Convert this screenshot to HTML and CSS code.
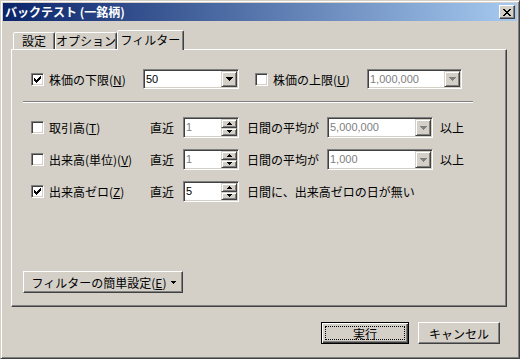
FILE: index.html
```html
<!DOCTYPE html>
<html lang="ja">
<head>
    <meta charset="UTF-8">
    <title>バックテスト (一銘柄)</title>
    <link rel="stylesheet" href="styles.css">
</head>
<body>
    <div class="window">
        <div class="titleBar">
            <span class="titleText">バックテスト (一銘柄)</span>
            <div class="closeBtn">
                <svg width="8" height="7" viewBox="0 0 8 7"><path d="M0 0h2v1H0zM6 0h2v1H6zM1 1h2v1H1zM5 1h2v1H5zM2 2h4v1H2zM3 3h2v1H3zM2 4h4v1H2zM1 5h2v1H1zM5 5h2v1H5zM0 6h2v1H0zM6 6h2v1H6z"/></svg>
            </div>
        </div>
        <div class="content">
            <ul class="tabs">
                <li class="tab w42">設定</li>
                <li class="tab w62">オプション</li>
                <li class="tab now">フィルター</li>
            </ul>
            <div class="panel">
                <div class="row rowTop">
                    <label class="check w112">
                        <span class="box"><svg width="7" height="7" viewBox="0 0 7 7"><path d="M0 2h1v3H0zM1 3h1v3H1zM2 4h1v3H2zM3 3h1v3H3zM4 2h1v3H4zM5 1h1v3H5zM6 0h1v3H6z"/></svg></span>
                        <span>株価の下限(<u>N</u>)</span>
                    </label>
                    <div class="combo w96">
                        <span class="val">50</span>
                        <span class="dropBtn"><svg width="7" height="4" viewBox="0 0 7 4"><path d="M0 0h7v1H0zM1 1h5v1H1zM2 2h3v1H2zM3 3h1v1H3z"/></svg></span>
                    </div>
                    <label class="check w112 gap16">
                        <span class="box"></span>
                        <span>株価の上限(<u>U</u>)</span>
                    </label>
                    <div class="combo w95 disabled">
                        <span class="val">1,000,000</span>
                        <span class="dropBtn"><svg width="7" height="4" viewBox="0 0 7 4"><path d="M0 0h7v1H0zM1 1h5v1H1zM2 2h3v1H2zM3 3h1v1H3z"/></svg></span>
                    </div>
                </div>

                <div class="sep"></div>

                <div class="rows">
                    <div class="row">
                        <label class="check w119">
                            <span class="box"></span>
                            <span>取引高(<u>T</u>)</span>
                        </label>
                        <span class="txt w33">直近</span>
                        <div class="spin disabled">
                            <span class="val">1</span>
                            <span class="spinBtns">
                                <span class="spinBtn"><svg width="5" height="3" viewBox="0 0 5 3"><path d="M2 0h1v1H2zM1 1h3v1H1zM0 2h5v1H0z"/></svg></span>
                                <span class="spinBtn"><svg width="5" height="3" viewBox="0 0 5 3"><path d="M0 0h5v1H0zM1 1h3v1H1zM2 2h1v1H2z"/></svg></span>
                            </span>
                        </div>
                        <span class="txt avg">日間の平均が</span>
                        <div class="combo w106 disabled">
                            <span class="val">5,000,000</span>
                            <span class="dropBtn"><svg width="7" height="4" viewBox="0 0 7 4"><path d="M0 0h7v1H0zM1 1h5v1H1zM2 2h3v1H2zM3 3h1v1H3z"/></svg></span>
                        </div>
                        <span class="txt over">以上</span>
                    </div>

                    <div class="row">
                        <label class="check w119">
                            <span class="box"></span>
                            <span>出来高(単位)(<u>V</u>)</span>
                        </label>
                        <span class="txt w33">直近</span>
                        <div class="spin disabled">
                            <span class="val">1</span>
                            <span class="spinBtns">
                                <span class="spinBtn"><svg width="5" height="3" viewBox="0 0 5 3"><path d="M2 0h1v1H2zM1 1h3v1H1zM0 2h5v1H0z"/></svg></span>
                                <span class="spinBtn"><svg width="5" height="3" viewBox="0 0 5 3"><path d="M0 0h5v1H0zM1 1h3v1H1zM2 2h1v1H2z"/></svg></span>
                            </span>
                        </div>
                        <span class="txt avg">日間の平均が</span>
                        <div class="combo w106 disabled">
                            <span class="val">1,000</span>
                            <span class="dropBtn"><svg width="7" height="4" viewBox="0 0 7 4"><path d="M0 0h7v1H0zM1 1h5v1H1zM2 2h3v1H2zM3 3h1v1H3z"/></svg></span>
                        </div>
                        <span class="txt over">以上</span>
                    </div>

                    <div class="row">
                        <label class="check w119">
                            <span class="box"><svg width="7" height="7" viewBox="0 0 7 7"><path d="M0 2h1v3H0zM1 3h1v3H1zM2 4h1v3H2zM3 3h1v3H3zM4 2h1v3H4zM5 1h1v3H5zM6 0h1v3H6z"/></svg></span>
                            <span>出来高ゼロ(<u>Z</u>)</span>
                        </label>
                        <span class="txt w33">直近</span>
                        <div class="spin">
                            <span class="val">5</span>
                            <span class="spinBtns">
                                <span class="spinBtn"><svg width="5" height="3" viewBox="0 0 5 3"><path d="M2 0h1v1H2zM1 1h3v1H1zM0 2h5v1H0z"/></svg></span>
                                <span class="spinBtn"><svg width="5" height="3" viewBox="0 0 5 3"><path d="M0 0h5v1H0zM1 1h3v1H1zM2 2h1v1H2z"/></svg></span>
                            </span>
                        </div>
                        <span class="txt avg">日間に、出来高ゼロの日が無い</span>
                    </div>
                </div>

                <div class="btn menuBtn">
                    <span>フィルターの簡単設定(<u>E</u>)</span>
                    <svg width="5" height="3" viewBox="0 0 5 3"><path d="M0 0h5v1H0zM1 1h3v1H1zM2 2h1v1H2z"/></svg>
                </div>
            </div>

            <div class="dialogBtns">
                <div class="btn default"><span class="focus">実行</span></div>
                <div class="btn cancel">キャンセル</div>
            </div>
        </div>
    </div>
</body>
</html>
```

FILE: styles.css
```css
* {
    padding: 0;
    margin: 0;
    box-sizing: border-box;
}

body {
    background-color: #d4d0c8;
    font-family: "Noto Sans CJK JP", "Liberation Sans", sans-serif;
    font-size: 12px;
    color: #000;
}

svg {
    display: block;
    shape-rendering: crispEdges;
}

u {
    text-decoration: underline;
    text-underline-offset: 1px;
}

/* 窗口外框 */
div.window {
    width: 520px;
    height: 359px;
    padding: 2px;
    border: 1px solid;
    border-color: #d4d0c8 #404040 #404040 #d4d0c8;
    box-shadow: inset 1px 1px #fff, inset -1px -1px #808080;
    background-color: #d4d0c8;
    display: flex;
    flex-direction: column;
}

div.titleBar {
    height: 18px;
    padding: 0 2px;
    background: linear-gradient(to right, #0a246a, #a6caf0);
    display: flex;
    align-items: center;
    justify-content: space-between;
}

span.titleText {
    color: #fff;
    font-weight: bold;
    font-size: 12px;
    line-height: 18px;
}

div.closeBtn {
    width: 16px;
    height: 14px;
    background-color: #d4d0c8;
    border: 1px solid;
    border-color: #fff #404040 #404040 #fff;
    box-shadow: inset -1px -1px #808080;
    display: flex;
    align-items: center;
    justify-content: center;
    padding-right: 1px;
}

div.content {
    flex: 1;
    padding: 9px 10px 0 8px;
}

/* 标签页 */
ul.tabs {
    list-style: none;
    height: 19px;
    padding-left: 2px;
    display: flex;
    align-items: flex-end;
    position: relative;
    z-index: 1;
}

ul.tabs li.tab {
    height: 17px;
    border: 1px solid;
    border-bottom: none;
    border-color: #fff #404040 transparent #fff;
    border-radius: 2px 2px 0 0;
    box-shadow: inset -1px 0 #808080;
    background-color: #d4d0c8;
    text-align: center;
    line-height: 15px;
}

ul.tabs li.w42 {
    width: 42px;
}

ul.tabs li.w62 {
    width: 62px;
}

ul.tabs li.now {
    width: 67px;
    height: 20px;
    margin-bottom: -1px;
    line-height: 17px;
}

/* 面板 */
div.panel {
    height: 258px;
    padding: 19px 0 0 0;
    border: 1px solid;
    border-color: #fff #404040 #404040 #fff;
    box-shadow: inset -1px -1px #808080;
}

div.row {
    height: 21px;
    padding-left: 19px;
    display: flex;
    align-items: center;
}

div.rowTop {
    height: 20px;
}

label.check {
    display: flex;
    align-items: center;
    gap: 5px;
    white-space: nowrap;
}

label.check span.box {
    width: 13px;
    height: 13px;
    flex: none;
    background-color: #fff;
    border: 1px solid;
    border-color: #808080 #fff #fff #808080;
    box-shadow: inset 1px 1px #404040, inset -1px -1px #d4d0c8;
    display: flex;
    align-items: center;
    justify-content: center;
}

.w112 {
    width: 112px;
}

.w119 {
    width: 119px;
}

.w33 {
    width: 33px;
}

.w95 {
    width: 95px;
}

.w96 {
    width: 96px;
}

.w106 {
    width: 106px;
}

.gap16 {
    margin-left: 16px;
}

span.txt {
    white-space: nowrap;
}

span.avg {
    margin-left: 8px;
    width: 80px;
}

span.over {
    margin-left: 7px;
}

/* 下拉框和微调框 */
div.combo,
div.spin {
    height: 100%;
    background-color: #fff;
    border: 1px solid;
    border-color: #808080 #fff #fff #808080;
    box-shadow: inset 1px 1px #404040, inset -1px -1px #d4d0c8;
    padding: 1px;
    display: flex;
}

div.spin {
    width: 56px;
}

span.val {
    flex: 1;
    padding-left: 1px;
    font-family: "Liberation Sans", sans-serif;
    font-size: 11px;
    line-height: 16px;
    overflow: hidden;
    white-space: nowrap;
}

div.disabled span.val {
    color: #808080;
}

span.dropBtn,
span.spinBtn {
    width: 16px;
    background-color: #d4d0c8;
    border: 1px solid;
    border-color: #d4d0c8 #404040 #404040 #d4d0c8;
    box-shadow: inset 1px 1px #fff, inset -1px -1px #808080;
    display: flex;
    align-items: center;
    justify-content: center;
}

div.disabled span.dropBtn svg {
    fill: #808080;
}

span.spinBtns {
    width: 16px;
    display: flex;
    flex-direction: column;
}

span.spinBtn {
    flex: 1;
}

div.sep {
    width: 450px;
    height: 2px;
    margin: 12px 0 14px 11px;
    border-top: 1px solid #808080;
    border-bottom: 1px solid #fff;
}

div.rows {
    display: flex;
    flex-direction: column;
    gap: 11px;
}

/* 按钮 */
div.btn {
    height: 22px;
    background-color: #d4d0c8;
    border: 1px solid;
    border-color: #fff #404040 #404040 #fff;
    box-shadow: inset -1px -1px #808080;
    display: flex;
    align-items: center;
    justify-content: center;
    white-space: nowrap;
}

div.menuBtn {
    width: 160px;
    margin: 69px 0 0 11px;
    gap: 5px;
    padding-left: 2px;
}

div.dialogBtns {
    margin-top: 15px;
    padding-right: 7px;
    display: flex;
    justify-content: flex-end;
    gap: 9px;
}

div.btn.default {
    width: 88px;
    padding: 3px;
    border: 1px solid #000;
    box-shadow: inset 1px 1px #fff, inset -1px -1px #404040, inset -2px -2px #808080;
}

div.btn.default span.focus {
    flex: 1;
    height: 100%;
    border: 1px dotted #000;
    text-align: center;
    line-height: 14px;
}

div.btn.cancel {
    width: 82px;
}
```
